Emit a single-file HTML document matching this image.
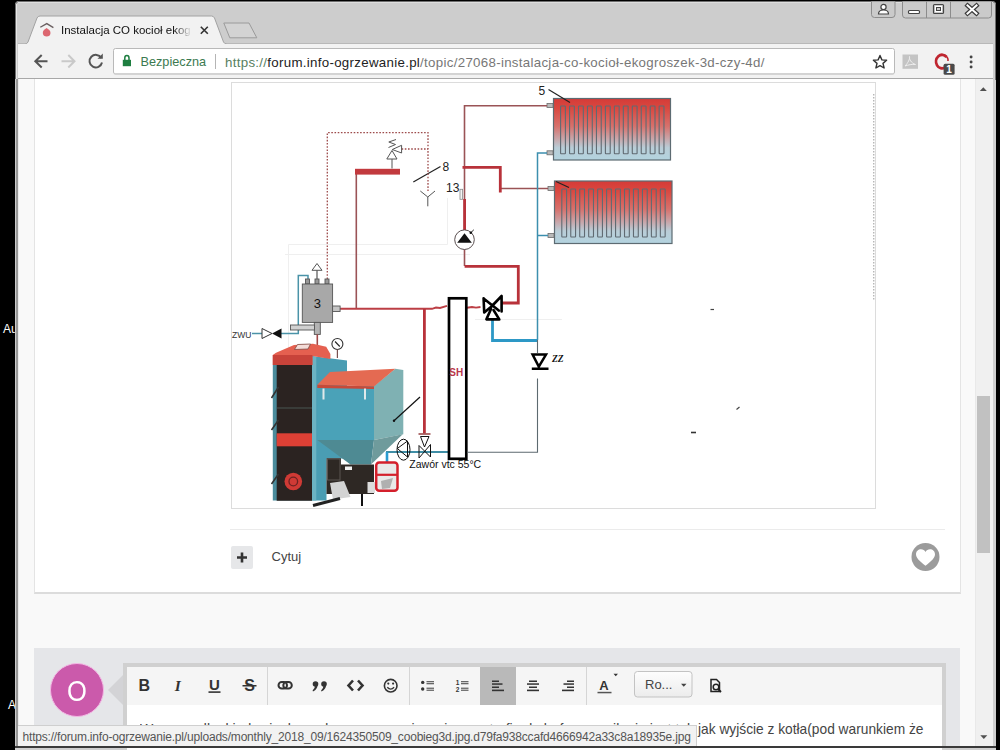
<!DOCTYPE html>
<html><head><meta charset="utf-8">
<style>
*{margin:0;padding:0;box-sizing:border-box}
html,body{width:1000px;height:750px;overflow:hidden;background:#000;font-family:"Liberation Sans",sans-serif;position:relative}
.abs{position:absolute}
#win{position:absolute;left:15px;top:1px;width:981px;height:748px;background:#cbcbcb;border-radius:4px 4px 0 0;border:1px solid #9a9a9a;border-right:3px solid #cfcfcf;border-bottom:0}
#botline{position:absolute;left:15px;top:746px;width:981px;height:2px;background:#3a3a3a}
#botline2{position:absolute;left:15px;top:748px;width:981px;height:2px;background:#cfcfcf}
#toolbar{position:absolute;left:18px;top:44px;width:975px;height:35px;background:#f2f2f2;border-bottom:1px solid #a7a7a7}
#page{position:absolute;left:18px;top:79px;width:957px;height:668px;background:#f9f9f9;overflow:hidden;border-left:1px solid #ececec}
#sb{position:absolute;left:975px;top:79px;width:18px;height:668px;background:#f1f1f1;border-left:1px solid #e8e8e8}
#panel{position:absolute;left:16px;top:-20px;width:927px;height:535px;background:#fff;border:1px solid #e2e2e2;border-bottom:2px solid #dedede}
#status{position:absolute;left:18px;top:725px;width:679px;height:22px;background:#f2f2f2;border-top:1px solid #cfcfcf;border-right:1px solid #cfcfcf;font-size:12px;letter-spacing:-0.19px;color:#555;padding:4px 0 0 4.5px;white-space:nowrap}
.txt{position:absolute;white-space:nowrap}
</style></head>
<body>
<div class="abs txt" style="left:3px;top:322px;color:#fff;font-size:12px">Au</div>
<div class="abs txt" style="left:8px;top:698px;color:#fff;font-size:12px">A</div>
<div id="win"></div><div id="botline2"></div>
<svg class="abs" style="left:0;top:0" width="1000" height="80" viewBox="0 0 1000 80">
  <!-- window frame top -->
  <path d="M15.5 80 V5 Q15.5 1.5 19 1.5 H991 Q995.5 1.5 995.5 5 V80" fill="#cdcdcd" stroke="#6e6e6e" stroke-width="1"/>
  <line x1="18" y1="2.5" x2="993" y2="2.5" stroke="#dedede"/>
  <line x1="16.5" y1="4" x2="16.5" y2="80" stroke="#e6e6e6"/>
  <!-- caption buttons -->
  <path d="M871.5 1.5 V14.5 Q871.5 17.5 874.5 17.5 H892 Q895 17.5 895 14.5 V1.5" fill="#cacaca" stroke="#8c8c8c"/>
  <path d="M902.5 1.5 V15 Q902.5 18 905.5 18 H988.5 Q991.5 18 991.5 15 V1.5" fill="#cacaca" stroke="#8c8c8c"/>
  <line x1="926.5" y1="1.5" x2="926.5" y2="18" stroke="#8c8c8c"/>
  <line x1="950.5" y1="1.5" x2="950.5" y2="18" stroke="#8c8c8c"/>
  <!-- profile icon -->
  <circle cx="883.5" cy="7" r="2.6" fill="#fff" stroke="#444" stroke-width="1.2"/>
  <path d="M878.5 14 Q878.5 10 883.5 10 Q888.5 10 888.5 14 Z" fill="#fff" stroke="#444" stroke-width="1.2"/>
  <!-- minimize -->
  <rect x="908.5" y="10.5" width="11" height="3" rx="1" fill="#fff" stroke="#444" stroke-width="1.2"/>
  <!-- maximize -->
  <rect x="933.5" y="4.5" width="10" height="9" rx="1" fill="none" stroke="#444" stroke-width="1.2"/>
  <rect x="935.5" y="6.5" width="6" height="5" fill="none" stroke="#fff" stroke-width="1"/>
  <rect x="936.5" y="7.5" width="4" height="3" fill="none" stroke="#444" stroke-width="1"/>
  <!-- close X -->
  <path d="M967.5 5.5 L976.5 13.5 M976.5 5.5 L967.5 13.5" stroke="#3a3a3a" stroke-width="4.4" stroke-linecap="square"/>
  <path d="M967.5 5.5 L976.5 13.5 M976.5 5.5 L967.5 13.5" stroke="#fff" stroke-width="2" stroke-linecap="square"/>
  <!-- new tab button -->
  <path d="M223.8 23 H249 L256.8 37.8 H229.8 Z" fill="#d3d3d3" stroke="#9a9a9a" stroke-width="1"/>
  <!-- tab -->
  <path d="M18 44 H25 Q27 44 28 42 L37 18 Q38 16 40 16 H211.5 Q213.5 16 214.5 18 L223.5 42 Q224.5 44 227 44 H993" fill="#f2f2f2" stroke="#a2a2a2" stroke-width="1"/>
  <rect x="18" y="44" width="975" height="35" fill="#f2f2f2"/>
  <line x1="18" y1="78.5" x2="993" y2="78.5" stroke="#a8a8a8"/>
  <!-- favicon -->
  <path d="M40.3 27.3 L46.8 23.6 L53.4 27.6" fill="none" stroke="#6a5f60" stroke-width="1.3"/>
  <path d="M46.6 28 C44 29.5 42.8 31 42.8 33 C42.8 35.3 44.6 36.6 46.6 36.6 C48.8 36.6 50.5 35.3 50.5 33 C50.5 31 49.2 29.5 46.6 28 Z" fill="#dc6770"/>
  <!-- tab close -->
  <path d="M200.8 26.8 L207.8 33.8 M207.8 26.8 L200.8 33.8" stroke="#333" stroke-width="1.6"/>
  <!-- nav -->
  <path d="M34.8 61.3 H47.5 M41.7 55 L35.3 61.3 L41.7 67.5" fill="none" stroke="#555" stroke-width="2"/>
  <path d="M61.5 61.3 H74.5 M68.3 55 L74.5 61.3 L68.3 67.5" fill="none" stroke="#c9c9c9" stroke-width="2"/>
  <path d="M101.3 58 A6.3 6.3 0 1 0 102 62.5" fill="none" stroke="#555" stroke-width="2"/>
  <path d="M97.5 58.8 H102.8 V53.5 Z" fill="#555"/>
  <!-- omnibox -->
  <rect x="113.5" y="48.5" width="781" height="25.5" rx="2" fill="#fff" stroke="#b9b9b9"/>
  <line x1="114" y1="73.8" x2="894" y2="73.8" stroke="#cfcfcf"/>
  <!-- lock -->
  <path d="M124.8 60 V58 Q124.8 55.6 126.9 55.6 Q129 55.6 129 58 V60" fill="none" stroke="#1e7e40" stroke-width="1.5"/>
  <rect x="122.8" y="59.8" width="8.2" height="6.4" fill="#1e7e40"/>
  <line x1="215.5" y1="54" x2="215.5" y2="69" stroke="#b5b5b5"/>
  <!-- star -->
  <path d="M880 55.5 L881.9 59.9 L886.6 60.3 L883 63.4 L884.1 68 L880 65.6 L875.9 68 L877 63.4 L873.4 60.3 L878.1 59.9 Z" fill="none" stroke="#333" stroke-width="1.4" stroke-linejoin="round"/>
  <!-- pdf icon -->
  <rect x="902.5" y="54.5" width="15.5" height="14.3" fill="#c4c4c4"/>
  <path d="M905 66 C908 63 910 59 909.5 56.5 C909 59 911 63 915.5 64.5 C912 64 908 65 905 66 Z" fill="none" stroke="#eee" stroke-width="1"/>
  <!-- opera-like O -->
  <path d="M946.5 57 A6 6.8 0 1 0 945 67.5" fill="none" stroke="#bf2630" stroke-width="2.8"/>
  <path d="M944.5 55.5 Q948.5 57 948 61" fill="none" stroke="#bf2630" stroke-width="1.6"/>
  <rect x="943.6" y="63.8" width="11" height="11" rx="1.5" fill="#4a4a4a"/>
  <text x="949.1" y="73" font-size="10" font-weight="bold" fill="#fff" text-anchor="middle" font-family="Liberation Sans">1</text>
  <!-- menu dots -->
  <circle cx="971.1" cy="57" r="1.45" fill="#444"/>
  <circle cx="971.1" cy="62" r="1.45" fill="#444"/>
  <circle cx="971.1" cy="67" r="1.45" fill="#444"/>
</svg>
<div class="txt" style="left:61px;top:24px;font-size:11.5px;color:#111;width:131px;overflow:hidden;-webkit-mask-image:linear-gradient(to right,#000 86%,transparent 100%)">Instalacja CO kocioł ekog</div>
<div class="txt" style="left:140.5px;top:54.5px;font-size:12.7px;color:#3b7a50">Bezpieczna</div>
<div class="txt" style="left:225px;top:54.5px;font-size:13.3px;letter-spacing:0.3px;color:#777"><span style="color:#58805f">https://</span><span style="color:#222">forum.info-ogrzewanie.pl</span>/topic/27068-instalacja-co-kocioł-ekogroszek-3d-czy-4d/</div>
<div id="page"></div>
<div class="abs" style="left:15px;top:79px;width:1px;height:668px;background:#cacaca"></div><div class="abs" style="left:16px;top:79px;width:2px;height:668px;background:#979797"></div>
<div class="abs" style="left:34px;top:79px;width:927px;height:515px;background:#fff;border:1px solid #e4e4e4;border-top:0;border-bottom:2px solid #dcdcdc"></div>
<div id="imgframe" class="abs" style="left:231px;top:82px;width:645px;height:427px;border:1px solid #dcdcdc;background:#fff"></div>
<svg id="diag" class="abs" style="left:0;top:0" width="1000" height="750" viewBox="0 0 1000 750">
<defs>
<linearGradient id="rg" x1="0" y1="0" x2="0" y2="1">
<stop offset="0" stop-color="#d53b38"/><stop offset="0.15" stop-color="#d9473f"/><stop offset="0.45" stop-color="#d7716c"/><stop offset="0.66" stop-color="#c8a7ab"/><stop offset="0.8" stop-color="#b9cdd7"/><stop offset="1" stop-color="#b3d3df"/>
</linearGradient>
</defs>
<g stroke="#efefef" stroke-width="1" fill="none">
<path d="M447.5 198 V244.5 H288.5 V500"/>
<path d="M285 254.5 H470"/>
<path d="M475 319.5 H562"/>
</g>
<rect x="553.5" y="98.5" width="117.0" height="61.5" fill="url(#rg)" stroke="#5d6b72" stroke-width="1.2"/>
<rect x="560.60" y="106" width="4.8" height="47.80000000000001" rx="0.5" fill="none" stroke="#606a72" stroke-width="1.1"/>
<rect x="569.56" y="106" width="4.8" height="47.80000000000001" rx="0.5" fill="none" stroke="#606a72" stroke-width="1.1"/>
<rect x="578.52" y="106" width="4.8" height="47.80000000000001" rx="0.5" fill="none" stroke="#606a72" stroke-width="1.1"/>
<rect x="587.48" y="106" width="4.8" height="47.80000000000001" rx="0.5" fill="none" stroke="#606a72" stroke-width="1.1"/>
<rect x="596.44" y="106" width="4.8" height="47.80000000000001" rx="0.5" fill="none" stroke="#606a72" stroke-width="1.1"/>
<rect x="605.40" y="106" width="4.8" height="47.80000000000001" rx="0.5" fill="none" stroke="#606a72" stroke-width="1.1"/>
<rect x="614.36" y="106" width="4.8" height="47.80000000000001" rx="0.5" fill="none" stroke="#606a72" stroke-width="1.1"/>
<rect x="623.32" y="106" width="4.8" height="47.80000000000001" rx="0.5" fill="none" stroke="#606a72" stroke-width="1.1"/>
<rect x="632.28" y="106" width="4.8" height="47.80000000000001" rx="0.5" fill="none" stroke="#606a72" stroke-width="1.1"/>
<rect x="641.24" y="106" width="4.8" height="47.80000000000001" rx="0.5" fill="none" stroke="#606a72" stroke-width="1.1"/>
<rect x="650.20" y="106" width="4.8" height="47.80000000000001" rx="0.5" fill="none" stroke="#606a72" stroke-width="1.1"/>
<rect x="659.16" y="106" width="4.8" height="47.80000000000001" rx="0.5" fill="none" stroke="#606a72" stroke-width="1.1"/>
<rect x="554.5" y="181" width="117.5" height="62.5" fill="url(#rg)" stroke="#5d6b72" stroke-width="1.2"/>
<rect x="561.80" y="189" width="4.8" height="48" rx="0.5" fill="none" stroke="#606a72" stroke-width="1.1"/>
<rect x="570.76" y="189" width="4.8" height="48" rx="0.5" fill="none" stroke="#606a72" stroke-width="1.1"/>
<rect x="579.72" y="189" width="4.8" height="48" rx="0.5" fill="none" stroke="#606a72" stroke-width="1.1"/>
<rect x="588.68" y="189" width="4.8" height="48" rx="0.5" fill="none" stroke="#606a72" stroke-width="1.1"/>
<rect x="597.64" y="189" width="4.8" height="48" rx="0.5" fill="none" stroke="#606a72" stroke-width="1.1"/>
<rect x="606.60" y="189" width="4.8" height="48" rx="0.5" fill="none" stroke="#606a72" stroke-width="1.1"/>
<rect x="615.56" y="189" width="4.8" height="48" rx="0.5" fill="none" stroke="#606a72" stroke-width="1.1"/>
<rect x="624.52" y="189" width="4.8" height="48" rx="0.5" fill="none" stroke="#606a72" stroke-width="1.1"/>
<rect x="633.48" y="189" width="4.8" height="48" rx="0.5" fill="none" stroke="#606a72" stroke-width="1.1"/>
<rect x="642.44" y="189" width="4.8" height="48" rx="0.5" fill="none" stroke="#606a72" stroke-width="1.1"/>
<rect x="651.40" y="189" width="4.8" height="48" rx="0.5" fill="none" stroke="#606a72" stroke-width="1.1"/>
<rect x="660.36" y="189" width="4.8" height="48" rx="0.5" fill="none" stroke="#606a72" stroke-width="1.1"/>
<g fill="#b9b9b9" stroke="#6b6b6b" stroke-width="0.8">
<rect x="547" y="103.5" width="6" height="4"/>
<rect x="547" y="150.8" width="6" height="4"/>
<rect x="548" y="186.5" width="6" height="4"/>
<rect x="548" y="233.5" width="6" height="4"/>
</g>
<text x="538.5" y="94.5" font-size="12" font-family="Liberation Sans" fill="#222">5</text>
<path d="M548.5 89.5 L570 102.5" stroke="#222" stroke-width="1.2"/>
<path d="M556 181.5 L569 187.5" stroke="#222" stroke-width="1.2"/>
<g fill="none" stroke="#9a5356" stroke-width="1.6">
<path d="M464.5 230 V105.7 H547"/>
<path d="M500 188.5 H548"/>
<path d="M356.3 174 V308.6"/>
<path d="M464.5 249 V266"/>
</g>
<g fill="none" stroke="#bc3f45" stroke-width="1.9">
<path d="M340 308.8 H432 L436 307.5 L440 308 L447 305.8"/>
<path d="M467 307.8 L472 307 L476 307.6 L480.5 307"/>
</g>
<g fill="none" stroke="#b8323a" stroke-width="2.8" stroke-linejoin="miter">
<path d="M462.5 167.3 H500.3 V192.5"/>
<path d="M464.6 266.3 H518.3 V303 H502"/>
<path d="M424.4 309 V433.5"/>
<path d="M464.6 199 V230"/>
</g>
<path d="M418.5 434 H430.5" stroke="#9b4a4a" stroke-width="1.6"/>
<rect x="355" y="168.8" width="45" height="5.8" fill="#c23a3e"/>
<rect x="460" y="189.3" width="2.6" height="10" fill="#f4f4f4" stroke="#8a8a8a" stroke-width="0.8"/>
<text x="446" y="191.5" font-size="12" font-family="Liberation Sans" fill="#222">13</text>
<text x="442.5" y="170.5" font-size="12" font-family="Liberation Sans" fill="#222">8</text>
<path d="M413.3 182 L440.5 166.5" stroke="#222" stroke-width="1.2"/>
<g fill="none" stroke="#9d4b4b" stroke-width="1.3" stroke-dasharray="1.6 1.6">
<path d="M327.3 279 V132.6 H428 V192"/>
<path d="M401.6 149 H428"/>
</g>
<g fill="#fff" stroke="#555" stroke-width="1">
<path d="M392 168.5 V159"/>
<path d="M386.8 159 H397 L392 150.5 Z"/>
<path d="M401.6 145.3 V153 L392.3 149.5 Z"/>
<path d="M388.5 147.5 L395.5 144.5 L388.8 142 L396 139.5" fill="none"/>
<path d="M420.3 191 L427.8 197 L435 191 M427.8 197 V206.3" fill="none"/>
</g>
<circle cx="464.5" cy="239.7" r="9.8" fill="#fff" stroke="#5a4f50" stroke-width="1"/>
<path d="M457.2 242.8 H471.8 L464.5 233.3 Z" fill="#111"/>
<path d="M470.5 233 L473.8 229.8" stroke="#222" stroke-width="1"/><circle cx="470.8" cy="232.8" r="1.3" fill="#111"/>
<g fill="none" stroke="#3c8fae" stroke-width="1.5">
<path d="M547 153 H537.5 V340"/>
<path d="M537.5 235.5 H548"/>
</g>
<path d="M492.5 319 V340.5 H537" fill="none" stroke="#2d98c6" stroke-width="2.8"/>
<path d="M386 452 H448" fill="none" stroke="#3f8ea6" stroke-width="2"/>
<path d="M387 452 V462" fill="none" stroke="#2a9bd0" stroke-width="2.6"/>
<path d="M308 279 V275.5 H298.3 V333.5 H281 M252 333.5 H262" fill="none" stroke="#4a93a8" stroke-width="1.5"/>
<rect x="449" y="298.3" width="17.3" height="160.5" fill="none" stroke="#000" stroke-width="2.7"/>
<text x="449.3" y="376" font-size="10" font-weight="bold" font-family="Liberation Sans" fill="#b8364a">SH</text>
<g fill="none" stroke="#000" stroke-width="2.6" stroke-linecap="round" stroke-linejoin="round">
<path d="M483.6 298.4 L498.8 310.6 M483.6 298.4 L484.2 312.5 L491.5 306.5 L501.6 296 V311.5 M491 309 L486.4 319.4 H499.3 L493.5 310"/>
</g>
<g fill="none" stroke="#000" stroke-width="2.5">
<path d="M532.6 354.6 H546 L538.8 366.6 Z M531.8 368.8 H548.5" fill="#fff"/>
</g>
<text x="552" y="362" font-size="9.5" font-weight="bold" font-style="italic" font-family="Liberation Serif" fill="#111">ZZ</text>
<g fill="none" stroke="#111" stroke-width="1">
<path d="M420.5 436.5 H429 L424.5 447 Z"/>
<path d="M419 445.5 V458 L430.5 444.5 V457 Z"/>
<ellipse cx="403.5" cy="449.7" rx="6.5" ry="10.5"/>
<path d="M397.3 448.5 L407.5 441 V457 Z"/>
</g>
<text x="409.3" y="467.5" font-size="10.5" font-family="Liberation Sans" fill="#111">Zawór vtc 55°C</text>
<path d="M537.5 340 V353 M537.5 378.4 V452.3 H467" fill="none" stroke="#5d6a70" stroke-width="1.1"/>
<path d="M873.8 94 V301" stroke="#999" stroke-width="1" stroke-dasharray="1.5 1.5"/>
<path d="M710.5 309.5 H714" stroke="#444" stroke-width="1.2"/>
<path d="M736.5 409.5 L739.5 407" stroke="#444" stroke-width="1.2"/>
<path d="M691 432.5 H696" stroke="#333" stroke-width="1.6"/>
<g stroke="#555" stroke-width="0.9">
<rect x="305.5" y="279" width="4" height="5" fill="#999"/><rect x="315" y="279" width="4" height="5" fill="#999"/><rect x="325" y="279" width="4" height="5" fill="#999"/>
<rect x="302.3" y="284" width="30.3" height="38.4" fill="#a8a8a8"/>
<rect x="332.6" y="306" width="7.5" height="5.5" fill="#c4c4c4"/>
<rect x="314.3" y="322.4" width="6" height="12" fill="#b3b3b3"/>
<rect x="290.5" y="325" width="24" height="5" fill="#d0d0d0"/>
</g>
<path d="M317 279 V270" stroke="#555" stroke-width="1.2"/>
<path d="M312 270.3 H322 L317 263.5 Z" fill="#fff" stroke="#555" stroke-width="1"/>
<text x="317.3" y="307.5" font-size="13" font-family="Liberation Sans" fill="#111" text-anchor="middle">3</text>
<text x="232" y="337.5" font-size="8.5" font-family="Liberation Sans" fill="#333">ZWU</text>
<path d="M262 328.5 V338.5 L272 333.5 Z" fill="#fff" stroke="#333" stroke-width="1"/>
<path d="M281.5 328.5 V338.5 L272 333.5 Z" fill="#111"/>
<circle cx="337.4" cy="344" r="5.5" fill="#fff" stroke="#333" stroke-width="1.1"/>
<path d="M335 341.5 L339.8 346.5" stroke="#222" stroke-width="1.1"/>
<path d="M337.4 349.5 V358" stroke="#7a5050" stroke-width="1.2"/>
<path d="M317.3 334.4 V345" stroke="#a04848" stroke-width="1.6"/>
<path d="M312 356 L347 360.5 V458.5 H326.5 V500.5 H312 Z" fill="#4a9db3"/>
<rect x="312" y="357" width="4.3" height="143.5" fill="#6cb3c3"/>
<path d="M272.8 365 V500.5 H312 V365 Z" fill="#4b8c9c"/>
<path d="M276.7 365 H312 V500.7 H276.7 Z" fill="#2b2321"/>
<path d="M276.7 408 H312" stroke="#50625f" stroke-width="0.8"/>
<rect x="276.7" y="433.3" width="35.3" height="13" fill="#dd4035"/>
<circle cx="293.3" cy="481.5" r="8.8" fill="#cf3a35"/>
<circle cx="293.3" cy="481.5" r="4.3" fill="none" stroke="#6d2222" stroke-width="1.3"/>
<path d="M272.8 365 V355 L276 352.8 L294 345 L313 343.8 L326.2 346.8 L330.4 354 L330.4 359 L312.4 356 V365 Z" fill="#e56050"/>
<path d="M272.8 355 H312.4 V365 H272.8 Z" fill="#c8433a"/>
<path d="M294.5 349.5 L297.5 344.5 L310.5 344 L308 349 Z" fill="#f3dcd8" stroke="#7d4a44" stroke-width="0.8"/>
<path d="M271.5 398 L278.5 387 M271.5 430 L278.5 420 M271.5 484 L278.5 474" stroke="#333" stroke-width="1.6"/>
<path d="M317.3 386 H374 V440 H317.3 Z" fill="#4aa2b8"/>
<path d="M374 386 L395.3 368.7 L403.3 370 V434.2 L374 440 Z" fill="#7fb1b3"/>
<path d="M317.3 384.7 L330 372 L395.3 368.7 L374 386.5 Z" fill="#e46a52"/>
<path d="M317.3 384.7 L374 386.5 L374 389 L317.3 388 Z" fill="#c64a3a"/>
<path d="M317.3 440 H374 L371 464.6 H350.5 Z" fill="#4e8a93"/>
<path d="M374 440 L402.7 434.2 L371 464.6 Z" fill="#6f9b9c"/>
<rect x="322.5" y="388.5" width="2" height="11" fill="#dfe9ea"/><rect x="364" y="388.5" width="2" height="11" fill="#dfe9ea"/>
<path d="M326.5 458.3 H341 V464.5 H374 V494 H326.5 Z" fill="#2e2824"/>
<rect x="327.5" y="459" width="12.5" height="21" fill="none" stroke="#5a5450" stroke-width="1"/>
<path d="M330 483 L344 481 L350.5 497 L333 499.5 Z" fill="#d3d3d3"/>
<rect x="345" y="466.5" width="7" height="3.5" fill="#f0f0f0"/>
<rect x="367.5" y="482" width="7.5" height="11" fill="#dcdcdc"/>
<path d="M362 494 V506" stroke="#111" stroke-width="2"/>
<path d="M313 505.5 L340 498.5" stroke="#222" stroke-width="3"/>
<rect x="376.2" y="462.5" width="21.3" height="28.3" rx="3" fill="#e9e9e9" stroke="#d4202c" stroke-width="2.5"/>
<path d="M376.2 474.8 H397.5" stroke="#d4202c" stroke-width="2.2"/>
<path d="M381 481 L393 478 L390 488 L382 489 Z" fill="#b0b0b0"/>
<path d="M394 420.7 L420 397" stroke="#111" stroke-width="1.2"/><circle cx="394" cy="420.7" r="1.2" fill="#111"/>
</svg>
<div class="abs" style="left:230px;top:529px;width:715px;height:1px;background:#ebebeb"></div>
<div class="abs" style="left:230.5px;top:546px;width:22px;height:22.5px;background:#e6e7e9;border-radius:2px"></div>
<svg class="abs" style="left:230.5px;top:546px" width="22" height="23"><path d="M11 6.5 V16.5 M6 11.5 H16" stroke="#333" stroke-width="2.6"/></svg>
<div class="txt" style="left:271.5px;top:549px;font-size:13px;color:#444">Cytuj</div>
<svg class="abs" style="left:911px;top:543px" width="30" height="30" viewBox="0 0 30 30"><circle cx="14.5" cy="14" r="14" fill="#9b9b9b"/><path d="M14.5 22.8 C8 17.5 5 14.8 5 11.2 C5 8.2 7.3 6.2 10 6.2 C12 6.2 13.6 7.3 14.5 8.9 C15.4 7.3 17 6.2 19 6.2 C21.7 6.2 24 8.2 24 11.2 C24 14.8 21 17.5 14.5 22.8 Z" fill="#fff"/></svg>
<!-- editor -->
<div class="abs" style="left:34px;top:648px;width:926px;height:100px;background:#e5e6e9"></div>
<svg class="abs" style="left:48px;top:663px" width="80" height="60"><circle cx="29" cy="27" r="26.5" fill="#cb5aab" stroke="#f3b7e4" stroke-width="1"/><path d="M75 12 L60 27 L75 42 Z" fill="#d3d3d6"/></svg>
<div class="txt" style="left:48px;top:673.5px;font-size:29px;line-height:34px;color:#fff;width:58px;text-align:center;transform:scaleX(0.88)">O</div>
<div class="abs" style="left:123px;top:662.5px;width:823px;height:100px;background:#fff;border:4px solid #d0d0d0;border-bottom:0"></div>
<div class="abs" style="left:127px;top:666.5px;width:815px;height:38px;background:#f5f5f5"></div>
<div class="abs" style="left:480px;top:666.5px;width:35.5px;height:38px;background:#b9b9b9"></div>
<div class="abs" style="left:266.5px;top:666.5px;width:1px;height:38px;background:#d5d5d5"></div>
<div class="abs" style="left:408.5px;top:666.5px;width:1px;height:38px;background:#d5d5d5"></div>
<div class="abs" style="left:586px;top:666.5px;width:1px;height:38px;background:#d5d5d5"></div>
<div class="txt" style="left:140px;top:721px;font-size:14px;color:#444;width:550px;overflow:hidden">W przypadku kiedy ciepła woda z zaworu mieszającego trafia do bufora, zasilanie jest takie samo</div>
<div class="txt" style="left:698px;top:721.5px;font-size:13.75px;color:#444">jak wyjście z kotła(pod warunkiem że</div>
<svg id="edicons" class="abs" style="left:0;top:0" width="1000" height="750" viewBox="0 0 1000 750">
<g font-family="Liberation Sans" fill="#333">
<text x="144.3" y="691.3" font-size="16" font-weight="bold" text-anchor="middle">B</text>
<text x="177.8" y="691.3" font-size="15.5" font-weight="bold" font-style="italic" font-family="Liberation Serif" text-anchor="middle">I</text>
<text x="214.5" y="690" font-size="15" font-weight="bold" text-anchor="middle">U</text>
<rect x="208.5" y="691.3" width="12" height="1.6"/>
<text x="249.5" y="691.3" font-size="16" font-weight="bold" text-anchor="middle">S</text>
<rect x="242.5" y="685" width="14" height="1.5"/>
</g>
<g fill="none" stroke="#333">
<!-- link -->
<rect x="278.5" y="682" width="8.5" height="6.5" rx="3.25" stroke-width="2"/>
<rect x="283.3" y="682" width="8.5" height="6.5" rx="3.25" stroke-width="2"/>
<!-- code -->
<path d="M353 680.5 L348.5 685.5 L353 690.5 M358 680.5 L362.5 685.5 L358 690.5" stroke-width="2.6"/>
<!-- smiley -->
<circle cx="390.7" cy="685.7" r="6.3" stroke-width="1.6"/>
<path d="M387.3 687.3 Q390.7 691 394.1 687.3" stroke-width="1.4"/>
</g>
<g fill="#333">
<circle cx="388.3" cy="683.6" r="1.1"/><circle cx="393.1" cy="683.6" r="1.1"/>
<!-- quote -->
<circle cx="315.5" cy="684" r="2.8"/><circle cx="324" cy="684" r="2.8"/>
<path d="M317.5 684.5 Q317.8 689 313 691.5 L312.6 690.6 Q315 688.6 315 685.5 Z"/>
<path d="M326 684.5 Q326.3 689 321.5 691.5 L321.1 690.6 Q323.5 688.6 323.5 685.5 Z"/>
<!-- bullet list -->
<circle cx="422.7" cy="682.4" r="1.7"/><circle cx="422.7" cy="689" r="1.7"/>
<rect x="426.5" y="681" width="7.5" height="1.3" fill="#666"/><rect x="426.5" y="683" width="7.5" height="1.3" fill="#666"/>
<rect x="426.5" y="687.6" width="7.5" height="1.3" fill="#666"/><rect x="426.5" y="689.6" width="7.5" height="1.3" fill="#666"/>
<!-- numbered -->
<text x="457.5" y="684.5" font-size="6.5" font-family="Liberation Sans" font-weight="bold" text-anchor="middle">1</text>
<text x="457.5" y="691.5" font-size="6.5" font-family="Liberation Sans" font-weight="bold" text-anchor="middle">2</text>
<rect x="461" y="681" width="7.5" height="1.3" fill="#666"/><rect x="461" y="683" width="7.5" height="1.3" fill="#666"/>
<rect x="461" y="687.6" width="7.5" height="1.3" fill="#666"/><rect x="461" y="689.6" width="7.5" height="1.3" fill="#666"/>
<!-- align left -->
<rect x="492" y="680.5" width="7" height="1.5"/><rect x="492" y="683.3" width="10.5" height="1.5"/><rect x="492" y="686.5" width="7" height="1.5"/><rect x="492" y="689.6" width="12" height="1.6"/>
<!-- align center -->
<rect x="529" y="680.5" width="8" height="1.5"/><rect x="527" y="683.3" width="12" height="1.5"/><rect x="529" y="686.5" width="8" height="1.5"/><rect x="527" y="689.6" width="12" height="1.6"/>
<!-- align right -->
<rect x="567" y="680.5" width="7" height="1.5"/><rect x="563.5" y="683.3" width="10.5" height="1.5"/><rect x="567" y="686.5" width="7" height="1.5"/><rect x="562" y="689.6" width="12" height="1.6"/>
<!-- font color -->
<text x="604" y="689.5" font-size="13" font-family="Liberation Sans" font-weight="bold" text-anchor="middle">A</text>
<rect x="597.5" y="691.8" width="14" height="1.5" fill="#555"/>
<path d="M613.5 673.8 H618 L615.75 676.3 Z"/>
</g>
<defs><linearGradient id="ddg" x1="0" y1="0" x2="0" y2="1"><stop offset="0" stop-color="#fdfdfd"/><stop offset="1" stop-color="#ececec"/></linearGradient></defs>
<rect x="634.5" y="671.5" width="57.5" height="25.5" rx="3" fill="url(#ddg)" stroke="#c3c3c3"/>
<text x="645" y="689.3" font-size="13" font-family="Liberation Sans" fill="#444">Ro...</text>
<path d="M681 683.8 H686.5 L683.75 686.8 Z" fill="#444"/>
<!-- preview -->
<path d="M711 679.5 H716.5 L719.5 682.5 V691.5 H711 Z" fill="none" stroke="#222" stroke-width="1.5"/>
<circle cx="716" cy="687" r="2.8" fill="#f5f5f5" stroke="#222" stroke-width="1.5"/>
<path d="M718 689 L721 692" stroke="#222" stroke-width="1.8"/>
</svg>
<div class="abs" style="left:975px;top:79px;width:18px;height:668px;background:#f0f0f0;border-left:1px solid #e9e9e9"></div>
<div class="abs" style="left:977px;top:395.5px;width:13px;height:157px;background:#c1c1c1"></div>
<svg class="abs" style="left:975px;top:79px" width="18" height="668"><path d="M4.8 12 H11.8 L8.3 8.3 Z" fill="#505050"/><path d="M5.3 656.3 H12.3 L8.8 660 Z" fill="#505050"/></svg>
<div id="status">https://forum.info-ogrzewanie.pl/uploads/monthly_2018_09/1624350509_coobieg3d.jpg.d79fa938ccafd4666942a33c8a18935e.jpg</div>
<div id="botline"></div>
</body></html>
